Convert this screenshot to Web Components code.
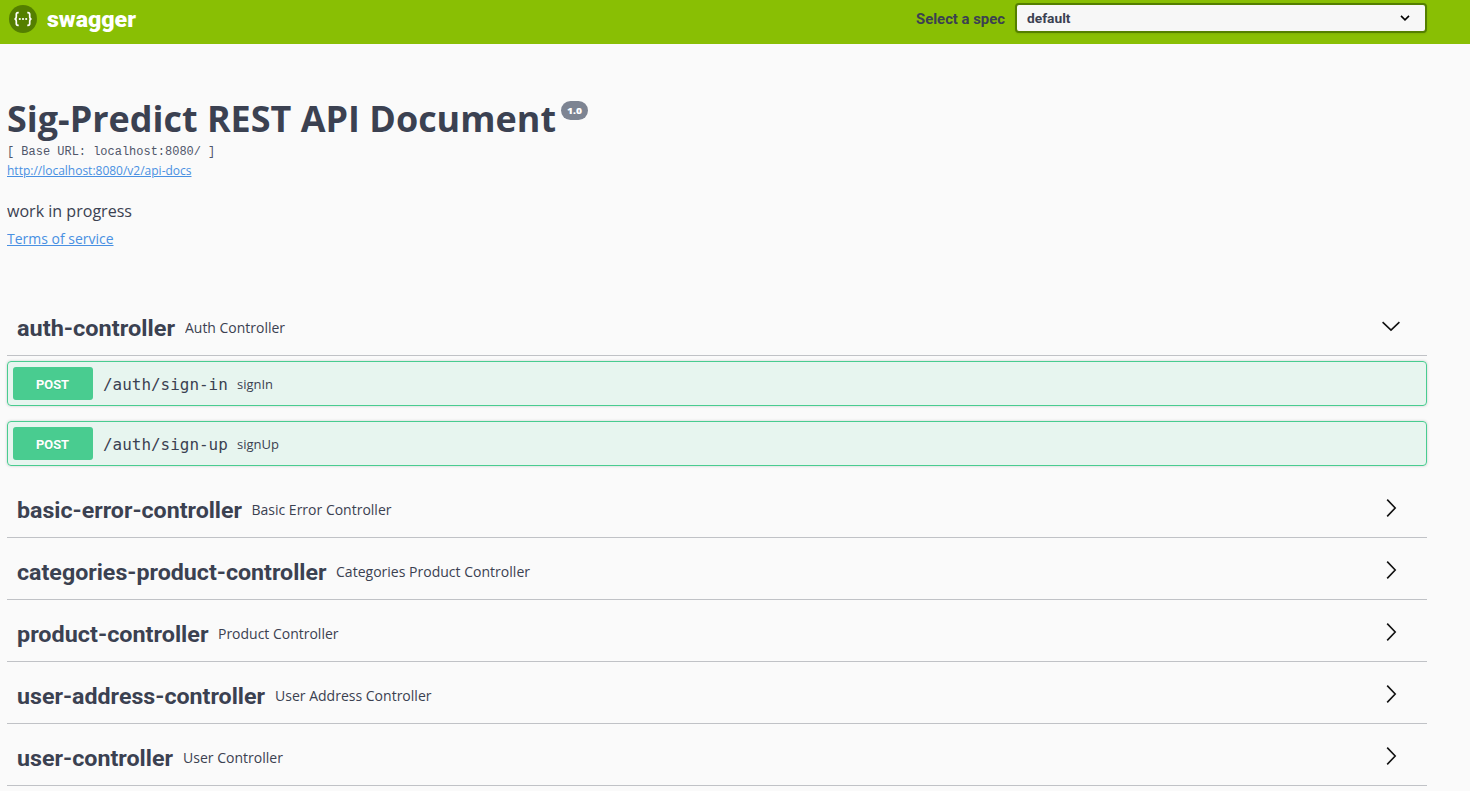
<!DOCTYPE html>
<html lang="en">
<head>
<meta charset="utf-8">
<title>Swagger UI</title>
<style>
html { background: #fafafa; }
body { margin: 0; background: #fafafa; color: #3b4151; font-family: "Open Sans", sans-serif; overflow: hidden; height: 791px; }
</style>
</head>
<body>
<api-page></api-page>
<script>
const define = (name, html, setup) => {
  const template = document.createElement('template');
  template.innerHTML = html;
  customElements.define(name, class extends HTMLElement {
    connectedCallback() {
      if (this.shadowRoot) return;
      const root = this.attachShadow({ mode: 'open' });
      root.append(template.content.cloneNode(true));
      if (setup) setup(this, root);
    }
  });
};

// Condenses or widens its slotted label to the width attribute.
define('fit-text', `
<style>
:host { display: block; flex: none; white-space: nowrap; }
span { display: inline-block; transform-origin: 0 50%; }
</style><span><slot></slot></span>`, (host, root) => {
  const span = root.querySelector('span');
  const width = parseFloat(host.getAttribute('width'));
  host.style.width = width + 'px';
  const natural = span.getBoundingClientRect().width;
  if (natural) span.style.transform = `scaleX(${width / natural})`;
});

define('api-topbar', `
<style>
:host { display: flex; box-sizing: border-box; height: 44px; padding: 3px 43px 0 9px; background: #89bf04; align-items: flex-start; font-family: Roboto, sans-serif; font-weight: 700; }
.logo { display: flex; flex: 1; align-items: flex-start; gap: 9.5px; color: #fff; }
svg { display: block; flex: none; }
.logo svg { margin-top: 2px; }
.logo fit-text { font-size: 22px; line-height: 34px; font-weight: 900; }
.label { font-size: 15px; line-height: 33px; margin-right: 10px; }
.select { box-sizing: border-box; width: 412px; height: 30px; border: 2px solid #547f00; border-radius: 4px; background: #f7f7f7; display: flex; align-items: center; justify-content: space-between; padding: 0 15px 0 10px; font-size: 13px; line-height: 26px; box-shadow: 0 1px 2px rgba(0,0,0,.08); }
.select fit-text { margin-top: 2px; }
</style>
<div class="logo">
<svg width="28" height="28" viewBox="0 0 28 28"><circle cx="14" cy="14" r="14" fill="#547f00"/><g fill="none" stroke="#fff" stroke-width="1.7"><path d="M9.7 7.6H9C7.8 7.6 7.3 8.2 7.3 9.4V11.8C7.3 13.2 6.8 13.9 5.5 14C6.8 14.1 7.3 14.8 7.3 16.2V18.6C7.3 19.8 7.8 20.4 9 20.4H9.7"/><path d="M18.3 7.6H19C20.2 7.6 20.7 8.2 20.7 9.4V11.8C20.7 13.2 21.2 13.9 22.5 14C21.2 14.1 20.7 14.8 20.7 16.2V18.6C20.7 19.8 20.2 20.4 19 20.4H18.3"/></g><g fill="#fff"><circle cx="10.8" cy="14" r="1.1"/><circle cx="14" cy="14" r="1.1"/><circle cx="17.2" cy="14" r="1.1"/></g></svg>
<fit-text width="89">swagger</fit-text>
</div>
<fit-text class="label" width="89">Select a spec</fit-text>
<div class="select"><fit-text width="43.5">default</fit-text><svg width="10" height="6" viewBox="0 0 10 6"><path d="M1 .9L5 4.8L9 .9" fill="none" stroke="#000" stroke-width="1.6"/></svg></div>
`);

define('api-info', `
<style>
:host { display: block; height: 250px; padding-top: 52px; box-sizing: border-box; margin-left: -.5px; }
.title { display: flex; align-items: flex-start; gap: 5.5px; height: 47px; }
.title .name { font-size: 36px; font-weight: 700; line-height: 46px; }
.badge { display: flex; box-sizing: border-box; width: 27px; height: 19px; margin-top: 5px; border-radius: 10px; background: #7d8492; color: #fff; justify-content: center; font: 800 9.5px/20px "Open Sans", sans-serif; }
.base { font: 12px/18px "Liberation Mono", monospace; color: #50566a; }
a { display: block; color: #4990e2; text-decoration: none; }
.docs { font-size: 12px; line-height: 20px; }
.desc { font-size: 16px; line-height: 22px; margin-top: 19px; }
.terms { font-size: 14px; line-height: 20px; margin-top: 7px; }
</style>
<div class="title"><fit-text class="name" width="549">Sig-Predict REST API Document</fit-text><span class="badge"><fit-text width="15">1.0</fit-text></span></div>
<fit-text class="base" width="208.3">[ Base URL: localhost:8080/ ]</fit-text>
<a class="docs"><fit-text width="184.5"><u>http://localhost:8080/v2/api-docs</u></fit-text></a>
<fit-text class="desc" width="125">work in progress</fit-text>
<a class="terms"><fit-text width="106.5"><u>Terms of service</u></fit-text></a>
`);

define('api-tag', `
<style>
:host { display: block; }
header { display: flex; box-sizing: border-box; height: 62px; padding: 0 25px 0 9.5px; border-bottom: 1px solid rgba(59,65,81,.3); align-items: center; }
.name { font: 700 22.5px/32px Roboto, sans-serif; margin: 6px 10px 0 0; }
.text { font-size: 14px; line-height: 20px; margin-top: 6px; flex: 1; }
svg { display: block; margin-top: 2px; }
:host([open]) svg { transform: rotate(90deg); }
.ops { display: none; }
:host([open]) .ops { display: flex; flex-direction: column; gap: 15px; padding: 5px 0 10px; }
</style>
<header><div class="name"></div><div class="text"></div>
<svg width="22" height="22" viewBox="0 0 22 22"><path d="M7.2 2.6L15.2 11L7.2 19.4" fill="none" stroke="#111" stroke-width="1.6"/></svg></header>
<div class="ops"><slot></slot></div>
`, (host, root) => {
  const fill = (cls, text, width) => {
    const fit = document.createElement('fit-text');
    fit.setAttribute('width', width);
    fit.textContent = text;
    root.querySelector(cls).append(fit);
  };
  fill('.name', host.getAttribute('name'), host.getAttribute('nw'));
  fill('.text', host.getAttribute('text'), host.getAttribute('tw'));
});

define('api-operation', `
<style>
:host { display: flex; box-sizing: border-box; height: 45px; padding: 5px; border: 1px solid #49cc90; border-radius: 4px; background: rgba(73,204,144,.1); box-shadow: 0 0 3px rgba(0,0,0,.19); align-items: center; }
.method { display: flex; justify-content: center; width: 80px; height: 33px; border-radius: 3px; background: #49cc90; color: #fff; font: 700 13.5px/34px Roboto, sans-serif; text-shadow: 0 1px 0 rgba(0,0,0,.1); }
.method fit-text { margin-right: 1px; }
.path { font: 15px/20px "DejaVu Sans Mono", monospace; margin: 2px 9.5px 0 10px; }
.summary { font-size: 13px; line-height: 18px; margin-top: 1px; }
</style>
<div class="method"><fit-text width="33">POST</fit-text></div>
<div class="path"><slot name="path"></slot></div>
<div class="summary"><slot></slot></div>
`);

define('api-page', `
<style>
:host { display: block; }
main { display: block; margin: 0 43px 0 7px; }
</style>
<api-topbar></api-topbar>
<main>
<api-info></api-info>
<api-tag open name="auth-controller" nw="158" text="Auth Controller" tw="100">
<api-operation><fit-text slot="path" width="124.8">/auth/sign-in</fit-text><fit-text width="36">signIn</fit-text></api-operation>
<api-operation><fit-text slot="path" width="124.8">/auth/sign-up</fit-text><fit-text width="42">signUp</fit-text></api-operation>
</api-tag>
<api-tag name="basic-error-controller" nw="225" text="Basic Error Controller" tw="140"></api-tag>
<api-tag name="categories-product-controller" nw="309.5" text="Categories Product Controller" tw="194"></api-tag>
<api-tag name="product-controller" nw="191.5" text="Product Controller" tw="120.5"></api-tag>
<api-tag name="user-address-controller" nw="248" text="User Address Controller" tw="156.5"></api-tag>
<api-tag name="user-controller" nw="156" text="User Controller" tw="100"></api-tag>
</main>
`);
</script>
</body>
</html>
